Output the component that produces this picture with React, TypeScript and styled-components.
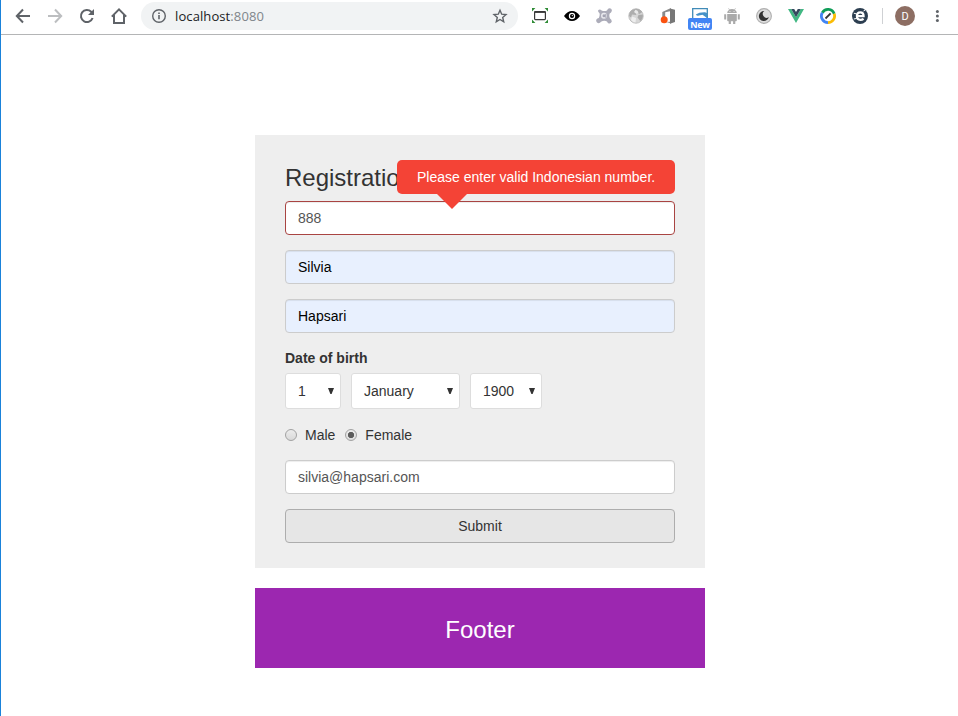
import React from 'react';
import styled, { createGlobalStyle } from 'styled-components';

const GlobalStyle = createGlobalStyle`
  *, *::before, *::after { box-sizing: border-box; }
  body {
    margin: 0;
    background: #fff;
    color: #333;
    font: 14px/20px "Liberation Sans", Arial, sans-serif;
  }
`;

const Window = styled.div`
  height: 716px;
  overflow: hidden;
  border-left: 1px solid #1a82da;
`;

const Toolbar = styled.header`
  display: flex;
  height: 35px;
  padding: 0 0 2px 6px;
  border-bottom: 1px solid #b4b5b6;
`;

const IconCell = styled.span`
  flex: none;
  display: flex;
  align-items: center;
  justify-content: center;
  width: 32px;
  height: 32px;
`;

const Omnibox = styled.div`
  flex: none;
  display: flex;
  align-items: center;
  width: 377px;
  height: 28px;
  margin: 2px 6px 0;
  padding: 0 10px;
  border-radius: 14px;
  background: #f1f3f4;
`;

const Url = styled.span`
  flex: 1;
  margin-left: 8px;
  font: 13px/28px "Open Sans", sans-serif;
  letter-spacing: 0.1px;
  color: #202124;
`;

const Port = styled.span`
  color: #80868b;
`;

const Divider = styled.span`
  flex: none;
  width: 1px;
  height: 16px;
  margin: 8px 12px 0 6px;
  background: #cfd1d4;
`;

const Avatar = styled.span`
  flex: none;
  width: 20px;
  height: 20px;
  margin: 6px 6px 0 0;
  border-radius: 50%;
  background: #8d6e63;
  color: #fff;
  font: 11px/21px Roboto, sans-serif;
  text-align: center;
`;

const NewIcon = styled(IconCell)`
  position: relative;
`;

const NewBadge = styled.span`
  position: absolute;
  left: 4px;
  top: 18px;
  width: 24px;
  height: 12px;
  border-radius: 2px;
  background: #4285f4;
  color: #fff;
  font: 700 9px/13px "Noto Sans", sans-serif;
  letter-spacing: -0.2px;
  text-align: center;
`;

const Page = styled.main`
  width: 450px;
  margin: 100px 0 0 254px;
`;

const Form = styled.form`
  display: flex;
  flex-direction: column;
  height: 433px;
  padding: 30px 30px 25px;
  background: #eee;
`;

const Title = styled.h1`
  margin: 0 0 10px;
  font-size: 24px;
  font-weight: 400;
  line-height: 26px;
`;

const Field = styled.div`
  position: relative;
  margin-bottom: 15px;
`;

const Input = styled.input<{ $state?: 'error' | 'autofill' }>`
  display: block;
  width: 100%;
  height: 34px;
  padding: 6px 12px;
  border: 1px solid ${p => (p.$state === 'error' ? '#a94442' : '#ccc')};
  border-radius: 4px;
  outline: none;
  background: ${p => (p.$state === 'autofill' ? '#e8f0fe' : '#fff')};
  color: ${p => (p.$state === 'autofill' ? '#000' : '#555')};
  box-shadow: inset 0 1px 1px rgba(0, 0, 0, 0.075);
  font: inherit;
`;

const Tooltip = styled.div`
  position: absolute;
  right: 0;
  bottom: 41px;
  width: 278px;
  height: 34px;
  padding-left: 20px;
  border-radius: 5px;
  background: #f44336;
  color: #fff;
  line-height: 34px;
  white-space: nowrap;

  &::after {
    content: '';
    position: absolute;
    left: 40px;
    top: 100%;
    border: 15px solid transparent;
    border-top-color: #f44336;
    border-bottom: 0;
  }
`;

const Label = styled.span`
  font-weight: 700;
  margin-bottom: 5px;
`;

const Selects = styled.div`
  display: flex;
  gap: 10px;
  margin-bottom: 16px;
`;

const SelectBox = styled.div<{ $width: number }>`
  position: relative;
  width: ${p => p.$width}px;
  height: 36px;

  select {
    appearance: none;
    width: 100%;
    height: 100%;
    padding: 0 12px;
    border: 1px solid #ddd;
    border-radius: 3px;
    background: #fff;
    color: #333;
    font: inherit;
  }

  svg {
    position: absolute;
    right: 7px;
    top: 15px;
    pointer-events: none;
  }
`;

const Radios = styled.div`
  display: flex;
  gap: 10px;
  margin-bottom: 15px;
`;

const RadioLabel = styled.label`
  display: flex;
  align-items: center;
  gap: 8px;
`;

const Radio = styled.input`
  appearance: none;
  width: 12px;
  height: 12px;
  margin: 0;
  border: 1px solid #a2a2a2;
  border-radius: 50%;
  background: linear-gradient(#ececec, #d9d9d9);

  &:checked {
    background: radial-gradient(circle, #5c5c5c 2.8px, transparent 3.5px),
      linear-gradient(#ececec, #dcdcdc);
  }
`;

const Submit = styled.button`
  height: 34px;
  padding: 0;
  border: 1px solid #adadad;
  border-radius: 4px;
  background: #e6e6e6;
  color: #333;
  font: inherit;
`;

const Footer = styled.footer`
  height: 80px;
  margin-top: 20px;
  padding-top: 2px;
  background: #9c27b0;
  color: #fff;
  font-size: 24px;
  line-height: 80px;
  text-align: center;
`;

const BackArrow = ({ color }: { color: string }) => (
  <svg width="16" height="16" viewBox="0 0 16 16" fill="none" stroke={color} strokeWidth="2">
    <path d="M15 8H2.2M8 1.5L1.8 8L8 14.5" />
  </svg>
);

const ForwardArrow = ({ color }: { color: string }) => (
  <svg width="16" height="16" viewBox="0 0 16 16" fill="none" stroke={color} strokeWidth="2">
    <path d="M1 8H13.8M8 1.5L14.2 8L8 14.5" />
  </svg>
);

const Reload = () => (
  <svg width="16" height="16" viewBox="0 0 16 16">
    <path d="M13.6 10A6 6 0 1 1 12.2 3.8L14 5.6" fill="none" stroke="#5f6368" strokeWidth="2" />
    <path d="M15 1V7H9Z" fill="#5f6368" />
  </svg>
);

const Home = () => (
  <svg width="18" height="18" viewBox="0 0 18 18" fill="none" stroke="#5f6368" strokeWidth="2">
    <path d="M1.8 9.6L9 2.3L16.2 9.6M4 8V16H14V8" />
  </svg>
);

const Info = () => (
  <svg width="16" height="16" viewBox="0 0 16 16">
    <circle cx="8" cy="8" r="6.3" fill="none" stroke="#5f6368" strokeWidth="1.4" />
    <path d="M7.2 7h1.6v4.3H7.2zM7.2 4.4h1.6V6H7.2z" fill="#5f6368" />
  </svg>
);

const Star = () => (
  <svg width="16" height="16" viewBox="0 0 16 16" fill="none" stroke="#5f6368" strokeWidth="1.4">
    <path d="M8 2.2L9.7 6.2L14 6.6L10.7 9.5L11.7 13.8L8 11.5L4.3 13.8L5.3 9.5L2 6.6L6.3 6.2Z" />
  </svg>
);

const Capture = () => (
  <svg width="16" height="16" viewBox="0 0 16 16">
    <path d="M0 0H3.4L0 3.4ZM16 0V3.4L12.6 0ZM0 15V11.6L3.4 15ZM16 15H12.6L16 11.6Z" fill="#2e8b35" />
    <rect x="2.6" y="3.6" width="10.8" height="8" rx=".8" fill="#fff" stroke="#383838" strokeWidth="1.2" />
    <path d="M2.6 4H13.4" stroke="#383838" strokeWidth="1.8" />
  </svg>
);

const Eye = () => (
  <svg width="16" height="16" viewBox="0 0 16 16">
    <path d="M0 8Q3.5 3 8 3T16 8Q12.5 13 8 13T0 8Z" fill="#000" />
    <circle cx="8" cy="8" r="3.2" fill="#fff" />
    <circle cx="8" cy="8" r="2" fill="#000" />
    <circle cx="8.3" cy="7.6" r=".6" fill="#fff" />
  </svg>
);

const Molecule = () => (
  <svg width="16" height="16" viewBox="0 0 16 16">
    <path
      d="M2.4 2Q4 .6 5.6 2.5Q8.5 3.6 11 2.4Q11.8 0 14 .2Q16.2 .8 15.8 3Q15.3 5 13.7 5.4Q12.8 8 14 10.5Q16 11.7 15.7 13.7Q14.8 16 12.6 15.4Q11.2 14.4 11 13.4Q8 11.8 5 13.8Q3.8 15.6 1.7 15Q-.4 13.6 .4 11.6Q1.2 10.4 2.8 10Q4.2 7.3 3.4 5Q1.4 3.7 2.4 2Z"
      fill="#acacb9"
    />
    <circle cx="8" cy="7.8" r="3" fill="#e9e9ee" />
    <circle cx="8" cy="7.8" r="1.5" fill="#a3a3b2" />
    <path d="M9.8 6v3.8" stroke="#a3a3b2" />
  </svg>
);

const Globe = () => (
  <svg width="16" height="16" viewBox="0 0 16 16">
    <circle cx="8" cy="8" r="7.2" fill="#d6d6d6" stroke="#c0c0c0" />
    <path d="M1.5 5Q3.5 1.2 8 .8Q12.5 1 14.3 4L11.5 6L9 4.5L8 7L4 6.5L3 9.5L1 8Z" fill="#adadad" />
    <path d="M7.5 1.7Q10 2 10.5 4.6L8.5 6L6 4Z" fill="#e9e9e9" />
    <path d="M10.5 7L14.8 6.5Q15.2 10.5 12.3 13L9.5 9.5Z" fill="#aaa" />
    <path d="M4 8.5L8 10L7.5 14.5Q5 14 3 12Z" fill="#eee" />
  </svg>
);

const Office = () => (
  <svg width="16" height="16" viewBox="0 0 16 16">
    <path d="M2.3 3.9L10.4 .3L11 .5V15.6L6.5 14.1L10 13.7V3.2L5.2 4.3V10.4L2.3 11.5Z" fill="#8a8a8a" />
    <path d="M10 .4L15 1.8V14.1L10 15.7Z" fill="#777" />
    <circle cx="4.2" cy="11.7" r="3.5" fill="#fa5310" />
  </svg>
);

const ScreenShare = () => (
  <svg width="16" height="16" viewBox="0 0 16 16">
    <path d="M.7 15V.7H15.3V15" fill="none" stroke="#408bb8" strokeWidth="1.3" />
    <path d="M13 4.2Q7 4 3.8 6.6Q4.5 8.2 7 7.4L10.5 6.8L15 10V5Z" fill="#4692c8" />
  </svg>
);

const Android = () => (
  <svg width="16" height="16" viewBox="0 0 16 16" fill="#aaa">
    <path d="M3.2 5.1A4.8 4.1 0 0 1 12.8 5.1ZM3.2 5.9H12.8V12.5Q12.8 13.3 12 13.3H4Q3.2 13.3 3.2 12.5Z" />
    <path d="M.2 6.3h2v5.3h-2zM13.8 6.3h2v5.3h-2zM4.7 12.5h2.2V16H4.7zM9.1 12.5h2.2V16H9.1z" />
    <path d="M4.5 .3L5.8 2.2M11.5 .3L10.2 2.2" stroke="#aaa" strokeWidth=".7" />
    <path d="M5.5 3.2h.9v.9h-.9zM9.6 3.2h.9v.9h-.9z" fill="#fff" />
  </svg>
);

const Moon = () => (
  <svg width="16" height="16" viewBox="0 0 16 16">
    <circle cx="8" cy="8" r="7.4" fill="#ddd" stroke="#b0b0b0" strokeWidth="1.1" />
    <path d="M8.3 3.1A5 5 0 1 0 12.8 8.9A3.2 3.2 0 0 1 8.3 3.1Z" fill="#333" />
  </svg>
);

const Vue = () => (
  <svg width="16" height="16" viewBox="0 0 16 16">
    <path d="M0 1H3.2L8 9.2L12.8 1H16L8 15Z" fill="#41b883" />
    <path d="M3.2 1H6.2L8 4.1L9.8 1H12.8L8 9.2Z" fill="#34495e" />
  </svg>
);

const Compass = () => (
  <svg width="16" height="16" viewBox="0 0 16 16">
    <g fill="none" strokeWidth="2.8">
      <path d="M2.3 4.7A6.6 6.6 0 0 1 14.2 5.8" stroke="#0f9d58" />
      <path d="M14.2 5.8A6.6 6.6 0 0 1 8 14.6" stroke="#fbbc05" />
      <path d="M8 14.6A6.6 6.6 0 0 1 2.3 4.7" stroke="#4285f4" />
    </g>
    <path d="M5.5 10.5L10.6 5.4" stroke="#333" strokeWidth="1.8" />
  </svg>
);

const LetterE = () => (
  <svg width="16" height="16" viewBox="0 0 16 16">
    <circle cx="8" cy="8" r="8" fill="#2c3e50" />
    <path
      d="M5.2 8.2H11.6Q11.6 4.3 8.3 4.3Q4.9 4.3 4.9 8.1Q4.9 11.9 8.4 11.9Q10.2 11.9 11.6 10.9"
      fill="none"
      stroke="#fff"
      strokeWidth="2.2"
    />
    <path d="M1.8 5.2L4.8 6M1.8 11L4.8 10.4M11.5 3L13.5 1.8" stroke="#fff" />
  </svg>
);

const Dots = () => (
  <svg width="16" height="16" viewBox="0 0 16 16" fill="#5f6368">
    <circle cx="8.4" cy="3.4" r="1.5" />
    <circle cx="8.4" cy="8" r="1.5" />
    <circle cx="8.4" cy="12.6" r="1.5" />
  </svg>
);

const Dropdown = ({ value, width }: { value: string; width: number }) => (
  <SelectBox $width={width}>
    <select defaultValue={value}>
      <option>{value}</option>
    </select>
    <svg width="6" height="6" viewBox="0 0 6 6">
      <path d="M0 0H6L3.6 6H2.4Z" fill="#333" />
    </svg>
  </SelectBox>
);

export default function App() {
  return (
    <Window>
      <GlobalStyle />
      <Toolbar>
        <IconCell><BackArrow color="#5f6368" /></IconCell>
        <IconCell><ForwardArrow color="#bcbec0" /></IconCell>
        <IconCell><Reload /></IconCell>
        <IconCell><Home /></IconCell>
        <Omnibox>
          <Info />
          <Url>localhost<Port>:8080</Port></Url>
          <Star />
        </Omnibox>
        <IconCell><Capture /></IconCell>
        <IconCell><Eye /></IconCell>
        <IconCell><Molecule /></IconCell>
        <IconCell><Globe /></IconCell>
        <IconCell><Office /></IconCell>
        <NewIcon>
          <ScreenShare />
          <NewBadge>New</NewBadge>
        </NewIcon>
        <IconCell><Android /></IconCell>
        <IconCell><Moon /></IconCell>
        <IconCell><Vue /></IconCell>
        <IconCell><Compass /></IconCell>
        <IconCell><LetterE /></IconCell>
        <Divider />
        <Avatar>D</Avatar>
        <IconCell><Dots /></IconCell>
      </Toolbar>
      <Page>
        <Form>
          <Title>Registration</Title>
          <Field>
            <Input $state="error" defaultValue="888" />
            <Tooltip>Please enter valid Indonesian number.</Tooltip>
          </Field>
          <Field><Input $state="autofill" defaultValue="Silvia" /></Field>
          <Field><Input $state="autofill" defaultValue="Hapsari" /></Field>
          <Label>Date of birth</Label>
          <Selects>
            <Dropdown value="1" width={56} />
            <Dropdown value="January" width={109} />
            <Dropdown value="1900" width={72} />
          </Selects>
          <Radios>
            <RadioLabel><Radio type="radio" name="gender" />Male</RadioLabel>
            <RadioLabel><Radio type="radio" name="gender" defaultChecked />Female</RadioLabel>
          </Radios>
          <Field><Input defaultValue="silvia@hapsari.com" /></Field>
          <Submit type="button">Submit</Submit>
        </Form>
        <Footer>Footer</Footer>
      </Page>
    </Window>
  );
}
